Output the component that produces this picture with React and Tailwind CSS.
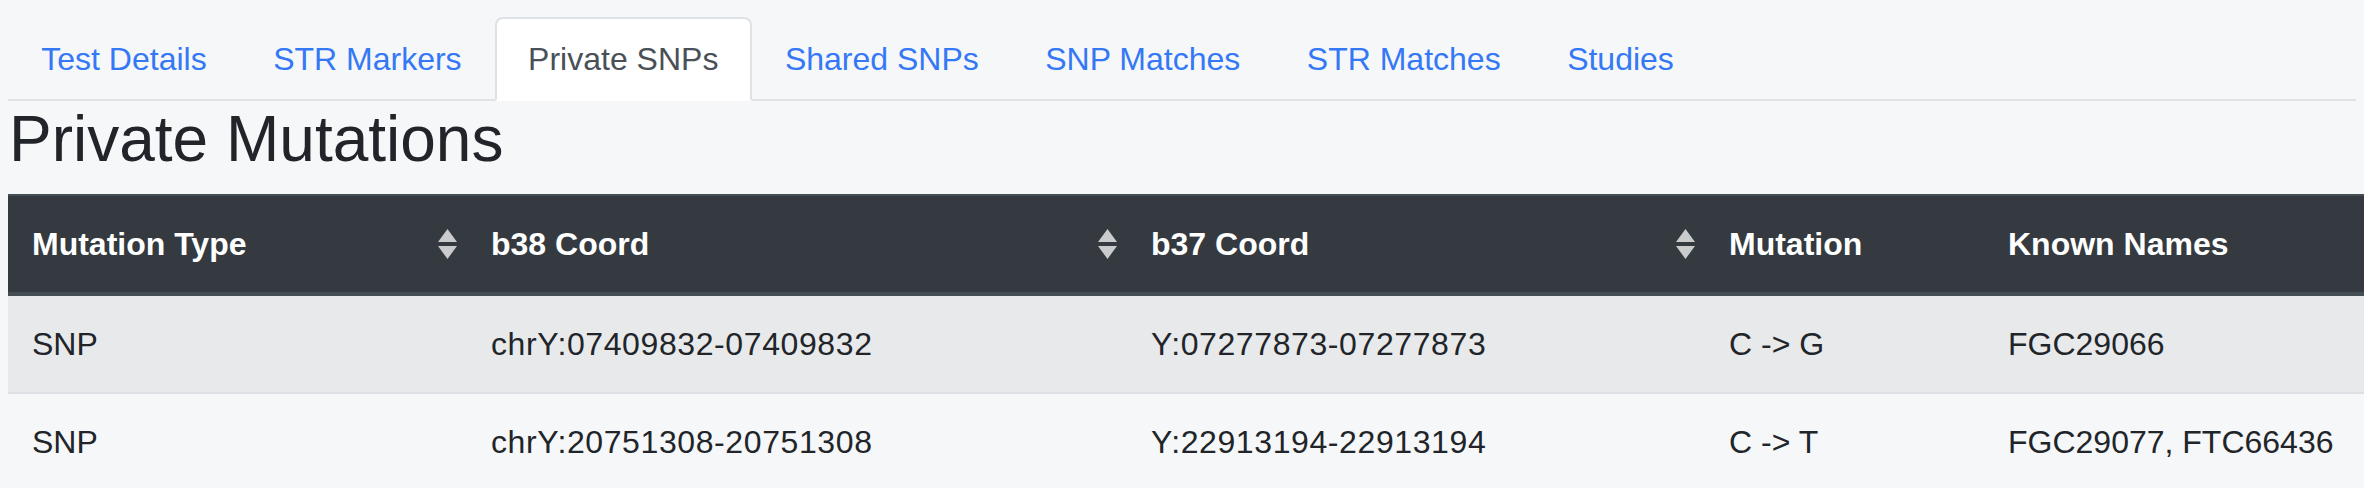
import React from 'react'

const TABS = ['Test Details', 'STR Markers', 'Private SNPs', 'Shared SNPs', 'SNP Matches', 'STR Matches', 'Studies']

const COLUMNS = [
  { label: 'Mutation Type', width: 'w-[459px]', sortable: true },
  { label: 'b38 Coord', width: 'w-[660px]', sortable: true },
  { label: 'b37 Coord', width: 'w-[578px]', sortable: true },
  { label: 'Mutation', width: 'w-[279px]', sortable: false },
  { label: 'Known Names', width: 'w-auto', sortable: false },
]

const ROWS = [
  ['SNP', 'chrY:07409832-07409832', 'Y:07277873-07277873', 'C -> G', 'FGC29066'],
  ['SNP', 'chrY:20751308-20751308', 'Y:22913194-22913194', 'C -> T', 'FGC29077, FTC66436'],
]

function SortIcon() {
  return (
    <svg
      className="absolute right-[10px] top-1/2 -translate-y-1/2 w-[19px] h-[30px] blur-[0.6px]"
      viewBox="0 0 19 30"
    >
      <polygon points="9.5,0 19,13 0,13" fill="#c9cbcd" />
      <polygon points="0,17 19,17 9.5,30" fill="#c9cbcd" />
    </svg>
  )
}

export default function App() {
  return (
    <div className="min-h-[488px] bg-[#f6f7f9] px-[8px] pt-[17px] font-['Liberation_Sans',Arial,sans-serif] text-[32px] leading-[48px] text-[#212529] overflow-hidden">
      {/* tabs */}
      <ul className="flex border-b-2 border-[#dee2e6]">
        {TABS.map(t => {
          const active = t === 'Private SNPs'
          return (
            <li key={t} className="-mb-[2px]">
              <span
                className={
                  active
                    ? 'block px-[31.25px] py-[16px] border-2 border-[#dee2e6] border-b-white rounded-t-[8px] bg-white text-[#495057]'
                    : 'block px-[31.25px] py-[16px] border-2 border-transparent text-[#3478f6]'
                }
              >
                {t}
              </span>
            </li>
          )
        })}
      </ul>

      <h2 className="text-[64px] leading-[1.2] font-medium mb-[16px] pl-[1px]">Private Mutations</h2>

      <table className="table-fixed border-collapse w-[2356px]">
        <thead>
          <tr className="bg-[#343a40] text-white">
            {COLUMNS.map(c => (
              <th
                key={c.label}
                className={`${c.width} relative text-left font-bold px-[24px] py-[24px] border-t-2 border-b-4 border-[#454d55]`}
              >
                {c.label}
                {c.sortable && <SortIcon />}
              </th>
            ))}
          </tr>
        </thead>
        <tbody>
          {ROWS.map((r, i) => (
            <tr key={i} className={i % 2 === 0 ? 'bg-[#e8e9eb]' : ''}>
              {r.map((cell, j) => (
                <td
                  key={j}
                  className={`px-[24px] py-[24px] ${j === 1 || j === 2 ? 'tracking-[0.6px]' : ''} ${i > 0 ? 'border-t-2 border-[#dcdfe3]' : ''}`}
                >
                  {cell}
                </td>
              ))}
            </tr>
          ))}
        </tbody>
      </table>
    </div>
  )
}
